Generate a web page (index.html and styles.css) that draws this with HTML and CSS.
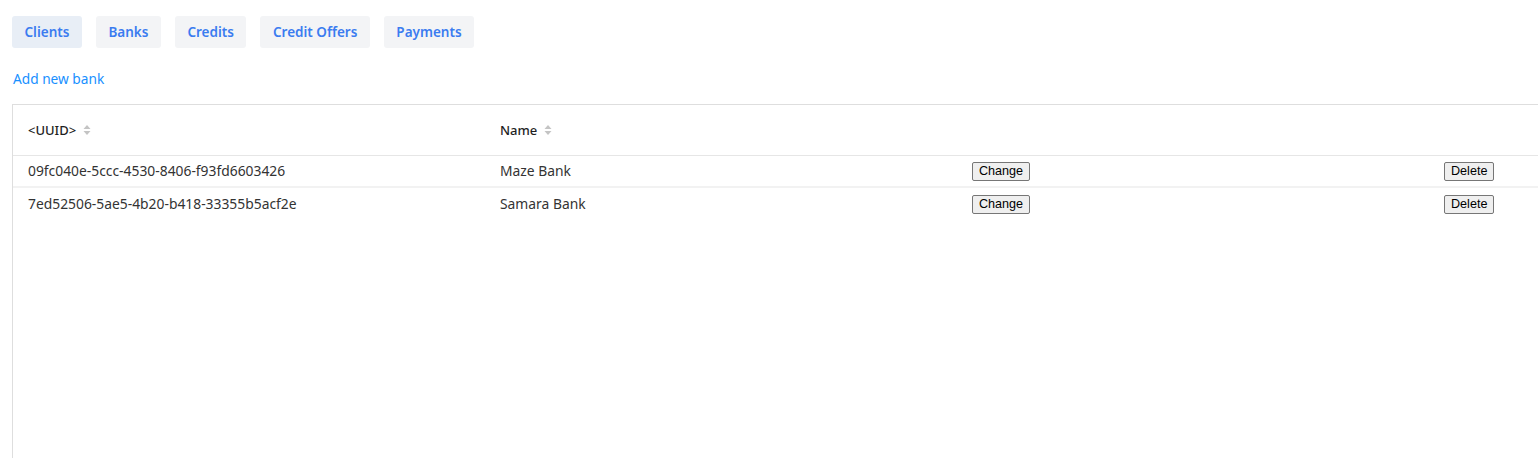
FILE: index.html
```html
<!DOCTYPE html>
<html lang="en">
<head>
<meta charset="utf-8">
<title>Banks</title>
<link rel="stylesheet" href="styles.css">
</head>
<body>
<div class="page">
  <nav class="tabs">
    <a class="tab tab-active">Clients</a>
    <a class="tab">Banks</a>
    <a class="tab">Credits</a>
    <a class="tab">Credit Offers</a>
    <a class="tab">Payments</a>
  </nav>
  <div class="actions"><a class="link">Add new bank</a></div>
  <div class="table-wrap">
    <table class="grid">
      <thead>
        <tr>
          <th><span class="th-inner">&lt;UUID&gt;<svg class="sorter" width="8" height="12" viewBox="0 0 8 12"><path d="M4 1 L7.5 5 H0.5 Z" fill="#c4c4c4"/><path d="M4 11 L7.5 7 H0.5 Z" fill="#c4c4c4"/></svg></span></th>
          <th><span class="th-inner">Name<svg class="sorter" width="8" height="12" viewBox="0 0 8 12"><path d="M4 1 L7.5 5 H0.5 Z" fill="#c4c4c4"/><path d="M4 11 L7.5 7 H0.5 Z" fill="#c4c4c4"/></svg></span></th>
          <th></th>
          <th></th>
        </tr>
      </thead>
      <tbody>
        <tr>
          <td>09fc040e-5ccc-4530-8406-f93fd6603426</td>
          <td>Maze Bank</td>
          <td><button class="btn">Change</button></td>
          <td><button class="btn">Delete</button></td>
        </tr>
        <tr>
          <td>7ed52506-5ae5-4b20-b418-33355b5acf2e</td>
          <td>Samara Bank</td>
          <td><button class="btn">Change</button></td>
          <td><button class="btn">Delete</button></td>
        </tr>
      </tbody>
    </table>
  </div>
</div>
</body>
</html>
```

FILE: styles.css
```css
html, body {
  margin: 0;
  padding: 0;
  overflow: hidden;
  background: #ffffff;
}

body {
  font-family: "Noto Sans", "Open Sans", "Liberation Sans", sans-serif;
  color: #262626;
}

.page {
  padding: 16px 0 0 12px;
  width: 1526px;
}

.tabs {
  display: flex;
  gap: 14px;
}

.tab {
  display: flex;
  align-items: center;
  height: 32px;
  padding: 0 12.5px;
  border-radius: 3px;
  background: #f3f4f6;
  color: #3b7cf0;
  font-size: 13.5px;
  font-weight: 600;
  cursor: pointer;
}

.tab-active {
  background: #e8eef6;
}

.actions {
  padding: 19px 0 0 1px;
  height: 37px;
  line-height: 22px;
}

.link {
  color: #1890ff;
  font-size: 13.7px;
  cursor: pointer;
}

.table-wrap {
  border-top: 1px solid #dedede;
  border-left: 1px solid #dedede;
  min-height: 400px;
  overflow: hidden;
}

.grid {
  width: 1888px;
  border-collapse: collapse;
  table-layout: fixed;
}

.grid th,
.grid td {
  box-sizing: border-box;
  width: 472px;
  padding: 0 15px;
  text-align: left;
}

.grid th {
  height: 50px;
  font-size: 13px;
  font-weight: 500;
  color: #1f1f1f;
  border-bottom: 1px solid #e6e6e6;
}

.th-inner {
  display: inline-flex;
  align-items: center;
  gap: 7px;
}

.sorter {
  display: block;
}

.grid td {
  height: 32px;
  font-size: 13.85px;
  color: #333333;
  border-bottom: 2px solid #f2f2f2;
}

.grid tbody tr:last-child td {
  border-bottom: none;
}

.btn {
  font-family: "Liberation Sans", Arial, sans-serif;
  font-size: 12.6px;
  color: #000000;
  background: #efefef;
  border: 1px solid #767676;
  border-radius: 2px;
  padding: 1px 6px;
  height: 19px;
  line-height: 15px;
}
```
